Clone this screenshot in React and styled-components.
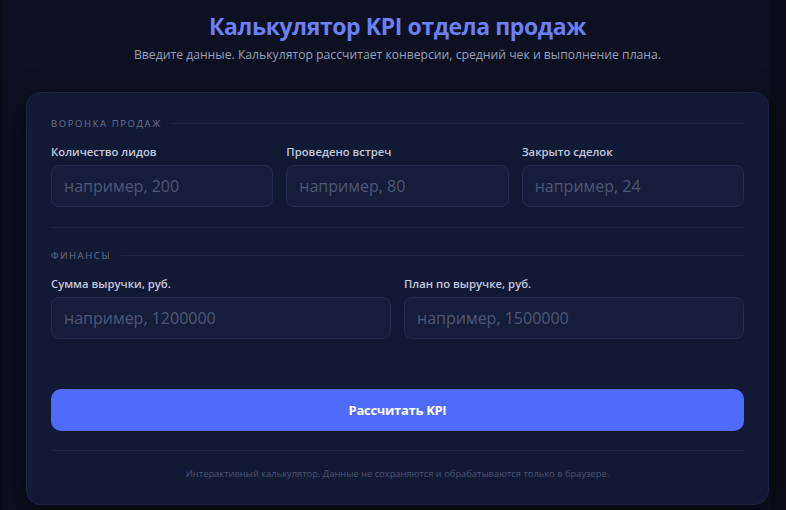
import React from "react"
import styled, { createGlobalStyle } from "styled-components"

const GlobalStyle = createGlobalStyle`
  * { box-sizing: border-box; }
  html, body {
    margin: 0;
    padding: 0;
    background: #0a0d17;
    font-family: "Open Sans", "Noto Sans", sans-serif;
  }
`

const Page = styled.div`
  width: 767px;
  margin-left: 3px;
  min-height: 510px;
  background: #0c1020;
  padding: 10px 0 0 23px;
`

const Header = styled.header`
  width: 743px;
  display: flex;
  flex-direction: column;
  align-items: center;
`

const Title = styled.h1`
  margin: 0;
  font-size: 23px;
  line-height: 32px;
  font-weight: 700;
  letter-spacing: -0.4px;
  color: #6b7ff6;
`

const Subtitle = styled.p`
  margin: 4px 0 0;
  font-size: 12.2px;
  line-height: 18px;
  color: #97a0bd;
`

const Card = styled.section`
  width: 743px;
  margin-top: 28px;
  background: #121935;
  border: 1px solid #1b2244;
  border-radius: 14px;
  box-shadow: 0 10px 30px rgba(0, 0, 0, 0.5);
  padding: 24px 24px 24px;
`

const Section = styled.div`
  padding-bottom: 20px;
  border-bottom: 1px solid ${(p) => (p.last ? "transparent" : "#1d2445")};
  margin-bottom: ${(p) => (p.last ? "0" : "21px")};
`

const SectionTitle = styled.div`
  display: flex;
  align-items: center;
  gap: 10px;
  font-size: 9.5px;
  letter-spacing: 1.6px;
  color: #6a7290;
  text-transform: uppercase;
  margin-bottom: 14px;

  &::after {
    content: "";
    flex: 1;
    height: 1px;
    background: #1f2748;
  }
`

const Grid = styled.div`
  display: grid;
  grid-template-columns: repeat(${(p) => p.cols}, 1fr);
  gap: 13px;
`

const Field = styled.label`
  display: flex;
  flex-direction: column;
`

const Label = styled.span`
  font-size: 11.3px;
  font-weight: 600;
  color: #c3c9de;
  margin-bottom: 5px;
  line-height: 16px;
`

const Input = styled.input`
  height: 42px;
  width: 100%;
  background: #161d3a;
  border: 1px solid #242c4f;
  border-radius: 8px;
  padding: 0 12px;
  font-family: inherit;
  font-size: 16px;
  color: #e5e8f5;
  outline: none;

  &::placeholder {
    color: #4e5777;
  }
`

const Button = styled.button`
  width: 100%;
  height: 42px;
  margin-top: 29px;
  border: none;
  border-radius: 10px;
  background: #4f6bfb;
  color: #ffffff;
  font-family: inherit;
  font-size: 13px;
  font-weight: 700;
  letter-spacing: -0.3px;
  cursor: pointer;
`

const Footer = styled.div`
  margin-top: 19px;
  padding-top: 16px;
  border-top: 1px solid #1d2445;
  text-align: center;
  font-size: 9.35px;
  color: #4b5370;
`

const funnel = [
  { label: "Количество лидов", placeholder: "например, 200" },
  { label: "Проведено встреч", placeholder: "например, 80" },
  { label: "Закрыто сделок", placeholder: "например, 24" },
]

const finance = [
  { label: "Сумма выручки, руб.", placeholder: "например, 1200000" },
  { label: "План по выручке, руб.", placeholder: "например, 1500000" },
]

export default function App() {
  return (
    <>
      <GlobalStyle />
      <Page>
        <Header>
          <Title>Калькулятор KPI отдела продаж</Title>
          <Subtitle>
            Введите данные. Калькулятор рассчитает конверсии, средний чек и выполнение плана.
          </Subtitle>
        </Header>
        <Card>
          <Section>
            <SectionTitle>Воронка продаж</SectionTitle>
            <Grid cols={3}>
              {funnel.map((f) => (
                <Field key={f.label}>
                  <Label>{f.label}</Label>
                  <Input type="number" placeholder={f.placeholder} />
                </Field>
              ))}
            </Grid>
          </Section>
          <Section last>
            <SectionTitle>Финансы</SectionTitle>
            <Grid cols={2}>
              {finance.map((f) => (
                <Field key={f.label}>
                  <Label>{f.label}</Label>
                  <Input type="number" placeholder={f.placeholder} />
                </Field>
              ))}
            </Grid>
          </Section>
          <Button>Рассчитать KPI</Button>
          <Footer>
            Интерактивный калькулятор. Данные не сохраняются и обрабатываются только в браузере.
          </Footer>
        </Card>
      </Page>
    </>
  )
}
